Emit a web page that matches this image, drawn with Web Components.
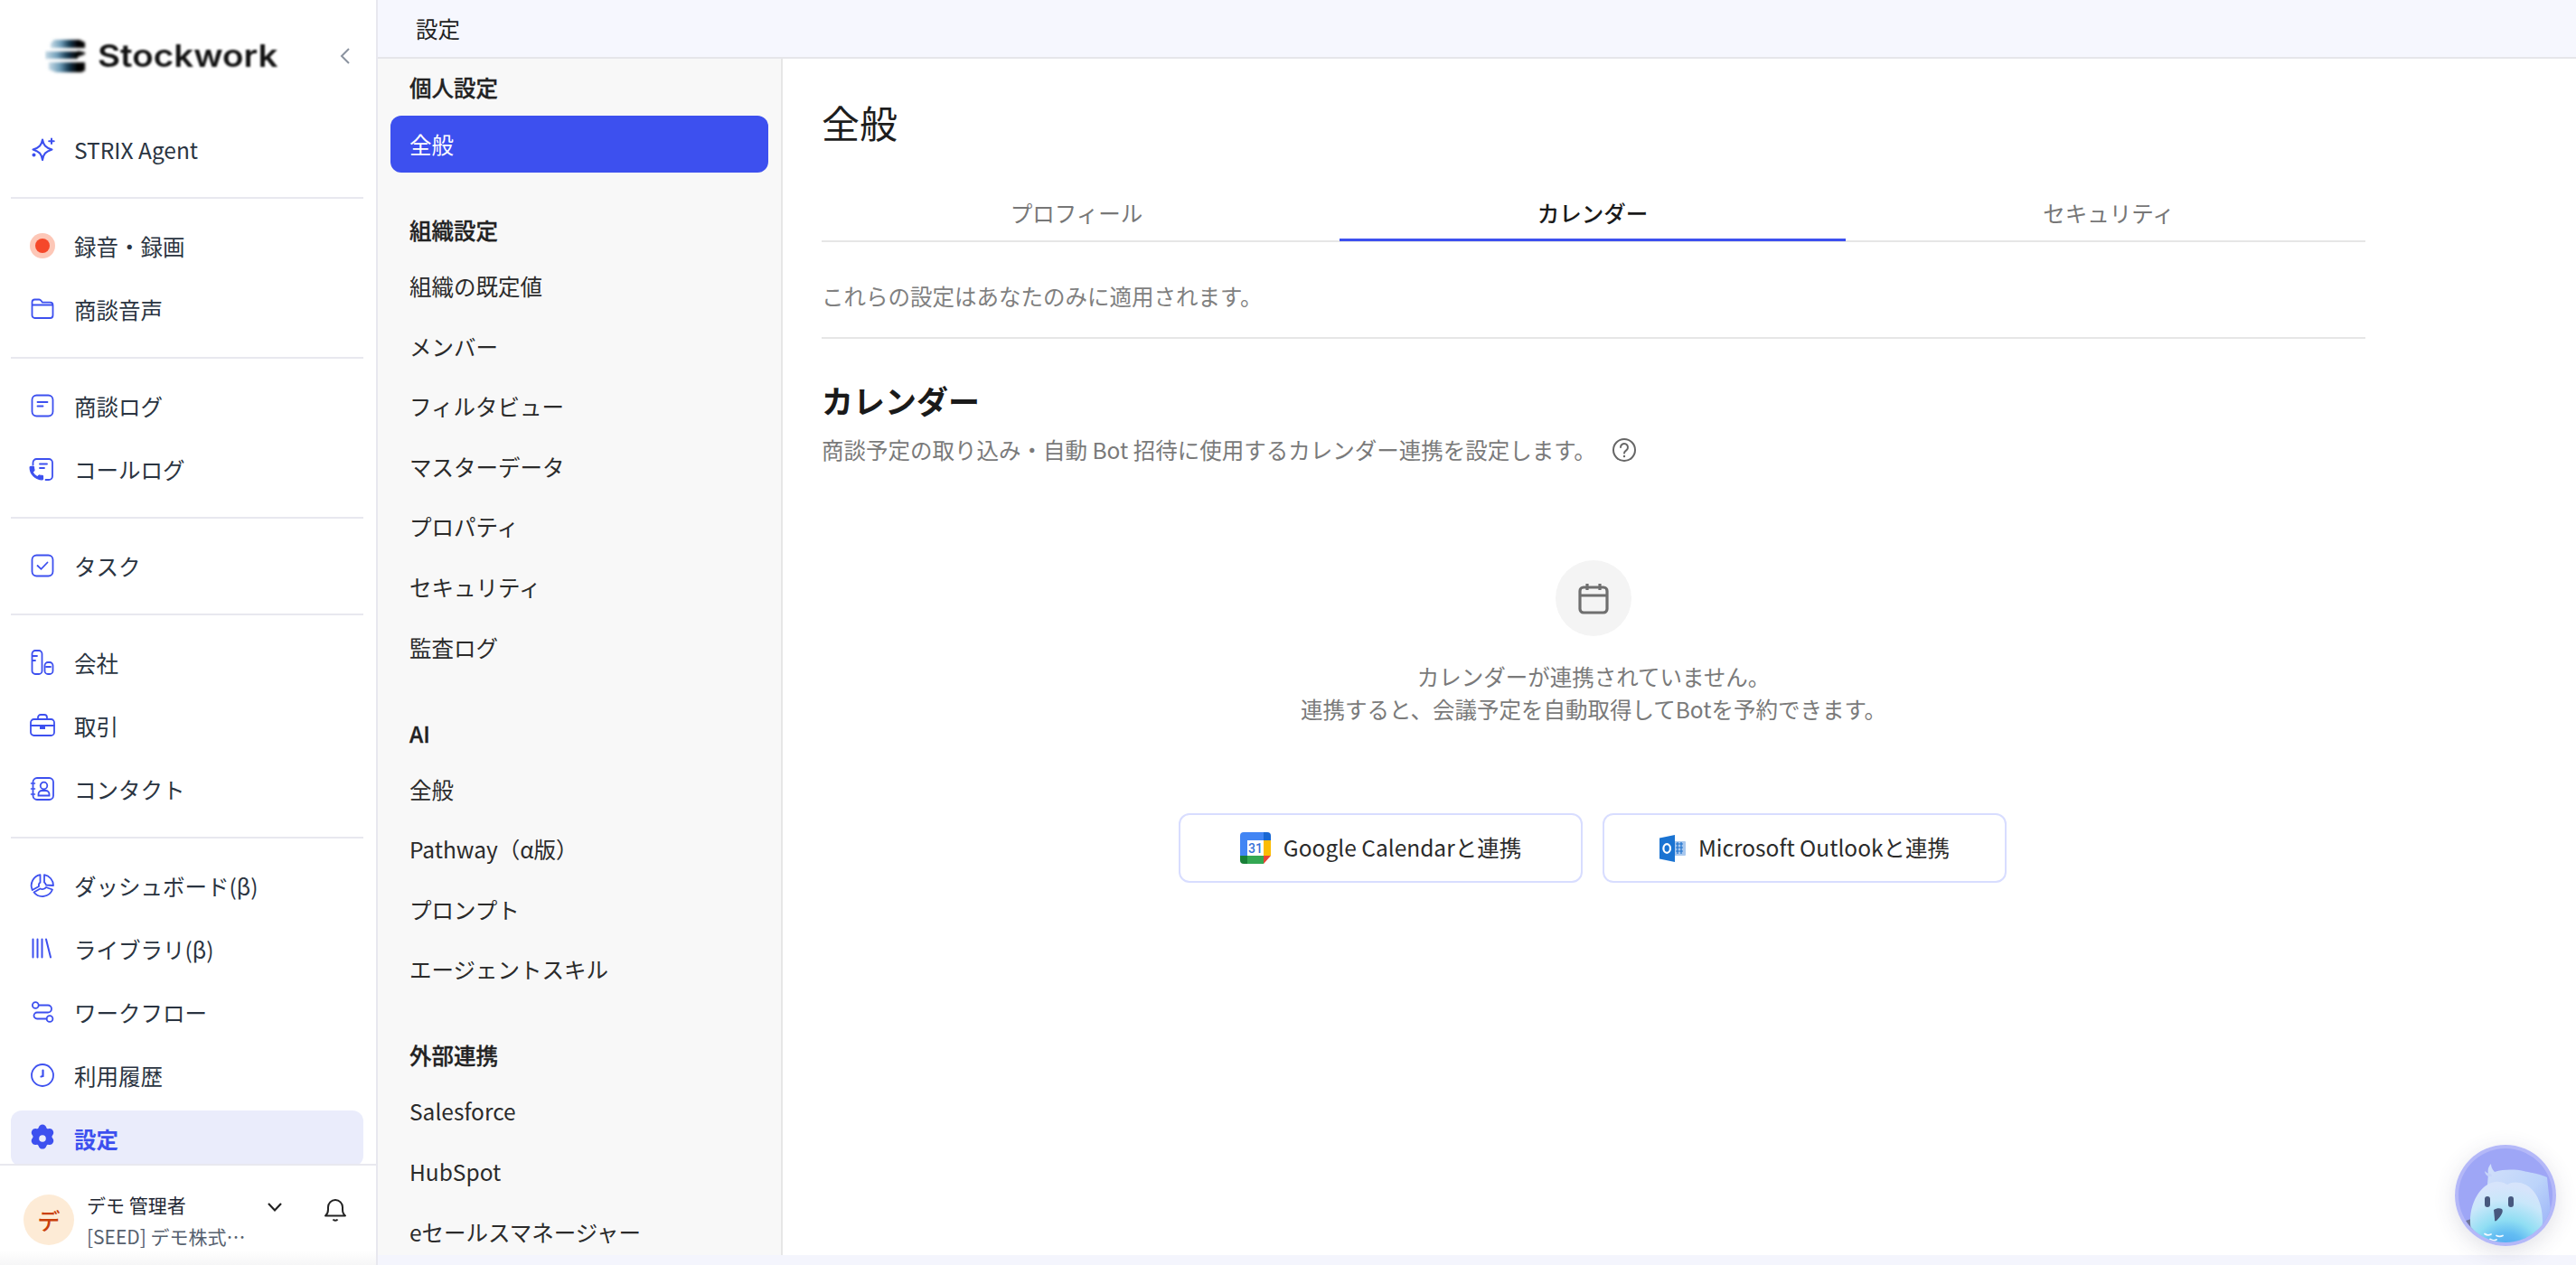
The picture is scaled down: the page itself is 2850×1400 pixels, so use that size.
<!DOCTYPE html>
<html lang="ja">
<head>
<meta charset="utf-8">
<title>設定</title>
<style>
html,body{margin:0;padding:0;height:100%;overflow:hidden}
body{font-family:"Noto Sans CJK JP","Noto Sans",sans-serif;background:#f4f5fd;color:#222}
</style>
</head>
<body>
<sw-app>
  <sw-sidebar slot="side">
    <sw-nav-item icon="spark">STRIX Agent</sw-nav-item>
    <sw-rule></sw-rule>
    <sw-nav-item icon="rec">録音・録画</sw-nav-item>
    <sw-nav-item icon="folder">商談音声</sw-nav-item>
    <sw-rule></sw-rule>
    <sw-nav-item icon="note">商談ログ</sw-nav-item>
    <sw-nav-item icon="call">コールログ</sw-nav-item>
    <sw-rule></sw-rule>
    <sw-nav-item icon="task">タスク</sw-nav-item>
    <sw-rule></sw-rule>
    <sw-nav-item icon="company">会社</sw-nav-item>
    <sw-nav-item icon="deal">取引</sw-nav-item>
    <sw-nav-item icon="contact">コンタクト</sw-nav-item>
    <sw-rule></sw-rule>
    <sw-nav-item icon="pie">ダッシュボード(β)</sw-nav-item>
    <sw-nav-item icon="lib">ライブラリ(β)</sw-nav-item>
    <sw-nav-item icon="flow">ワークフロー</sw-nav-item>
    <sw-nav-item icon="clock">利用履歴</sw-nav-item>
    <sw-nav-item icon="gear" active>設定</sw-nav-item>
  </sw-sidebar>
  <sw-topbar slot="top">設定</sw-topbar>
  <sw-settings-nav slot="mid">
    <sw-nav-head first>個人設定</sw-nav-head>
    <sw-set-item active>全般</sw-set-item>
    <sw-nav-head>組織設定</sw-nav-head>
    <sw-set-item>組織の既定値</sw-set-item>
    <sw-set-item>メンバー</sw-set-item>
    <sw-set-item>フィルタビュー</sw-set-item>
    <sw-set-item>マスターデータ</sw-set-item>
    <sw-set-item>プロパティ</sw-set-item>
    <sw-set-item>セキュリティ</sw-set-item>
    <sw-set-item>監査ログ</sw-set-item>
    <sw-nav-head>AI</sw-nav-head>
    <sw-set-item>全般</sw-set-item>
    <sw-set-item>Pathway（α版）</sw-set-item>
    <sw-set-item>プロンプト</sw-set-item>
    <sw-set-item>エージェントスキル</sw-set-item>
    <sw-nav-head>外部連携</sw-nav-head>
    <sw-set-item>Salesforce</sw-set-item>
    <sw-set-item>HubSpot</sw-set-item>
    <sw-set-item>eセールスマネージャー</sw-set-item>
  </sw-settings-nav>
  <sw-calendar-page slot="main"></sw-calendar-page>
  <sw-bot slot="float"></sw-bot>
</sw-app>
<script>
const ICONS = {
 spark:`<path d="M14 3.500C15 9.500 17.500 12.500 24.500 14.500C17.500 16.500 15 19.500 14 26C13 19.500 10.500 16.500 3.500 14.500C10.500 12.500 13 9.500 14 3.500Z" fill="none" stroke-width="2.100" stroke-linejoin="round"/><path d="M24 2.500v5.500M21.200 5.200h5.500" stroke-width="2"/><circle cx="4.500" cy="20.500" r="2" fill="currentColor" stroke="none"/>`,
 rec:`<circle cx="14" cy="14" r="14" fill="#fdc7b7" stroke="none"/><circle cx="14" cy="14" r="8" fill="#f5482a" stroke="none"/>`,
 folder:`<path d="M2.500 21V6.500a3 3 0 0 1 3-3h4.800c1 0 1.600.4 2.200 1.200l1.400 2h8.600a3 3 0 0 1 3 3V21a3 3 0 0 1-3 3h-17a3 3 0 0 1-3-3Z M2.500 9.500h23" fill="none"/>`,
 note:`<rect x="2.500" y="2.500" width="23" height="23" rx="5" fill="none"/><path d="M8.500 10h11M8.500 14.500h6"/>`,
 call:`<path d="M3.500 9.500V7a4 4 0 0 1 4-4H21a4 4 0 0 1 4 4v15a4 4 0 0 1-4 4h-3.500" fill="none"/><path d="M11 8.500h8M11 13h5" /><path transform="translate(-2.300 9) scale(.8)" d="M6.620 10.790c1.440 2.830 3.760 5.140 6.590 6.590l2.200-2.200c.27-.27.670-.36 1.020-.24 1.120.37 2.330.57 3.570.57.550 0 1 .45 1 1V20c0 .550-.45 1-1 1-9.390 0-17-7.610-17-17 0-.550.450-1 1-1h3.500c.550 0 1 .450 1 1 0 1.250.2 2.450.57 3.570.11.350.03.740-.25 1.020l-2.200 2.200z" fill="currentColor" stroke="currentColor" stroke-width="1.500"/>`,
 task:`<rect x="2.500" y="2.500" width="23" height="23" rx="5" fill="none"/><path d="M8.500 14l4 3.800 7-7.300" fill="none"/>`,
 company:`<rect x="2.500" y="1" width="11" height="26" rx="3.500" fill="none"/><rect x="16.500" y="14" width="9" height="13" rx="3.500" fill="none"/><path d="M3 7h5M3 12h3M18 19h5" />`,
 deal:`<rect x="1" y="7" width="26" height="18" rx="3.500" fill="none"/><path d="M9 7V5a3 3 0 0 1 3-3h4a3 3 0 0 1 3 3v2M1 14h26" fill="none"/><rect x="11" y="13.500" width="6" height="4.500" fill="currentColor" stroke="none"/>`,
 contact:`<rect x="3.500" y="2" width="22.500" height="24" rx="4.500" fill="none"/><circle cx="15.500" cy="10.500" r="3.800" fill="none"/><path d="M9.500 21.500v-1.500a4 4 0 0 1 4-4h4a4 4 0 0 1 4 4v1.500Z" fill="none"/><path d="M1.500 8h4M1.500 14h4M1.500 20h4" stroke-width="1.600"/>`,
 pie:`<path d="M16 2.200A12 12 0 0 1 26 14L18 13.500C17.500 12 16.800 11 16 10.500Z M11.500 2.200A12 12 0 0 0 2.800 19L10 15C9.500 13 10.200 11.500 11.500 10.500Z M4.500 21.500A12 12 0 0 0 25 18.500L18 16C16.500 18 13.500 18.500 11.500 17.500Z" fill="none" stroke-linejoin="round"/>`,
 lib:`<path d="M3.500 3.500v20M8.500 3.500v20M13.500 3.500v20M18 3.500l5 20" stroke-width="2"/>`,
 flow:`<circle cx="6.300" cy="6.500" r="3.400" fill="none"/><circle cx="22" cy="21.500" r="3.400" fill="none"/><path d="M9.800 6.500H20a4 4 0 0 1 0 8H8a3.500 3.500 0 0 0 0 7h10.500" fill="none"/>`,
 clock:`<circle cx="14" cy="14" r="12" fill="none"/><path d="M14.500 8.500v6.500l-2 .5" fill="none" stroke-width="2.200"/>`,
 gear:`<g fill="currentColor" stroke="none" transform="translate(14 14) scale(1.150) translate(-14 -14.500)"><path d="M14 .500c1.900 0 3.200 1.100 3.700 2.800.3 1 1.200 1.500 2.200 1.300 1.700-.4 3.300.2 4.200 1.800s.7 3.300-.5 4.600c-.7.800-.7 1.800 0 2.600 1.200 1.300 1.400 3 .5 4.600s-2.500 2.200-4.200 1.800c-1-.2-1.900.3-2.200 1.300-.5 1.700-1.800 2.800-3.700 2.800s-3.200-1.100-3.700-2.800c-.3-1-1.200-1.500-2.200-1.300-1.700.4-3.300-.2-4.200-1.800s-.7-3.300.5-4.600c.7-.8.7-1.800 0-2.600-1.200-1.300-1.400-3-.5-4.600s2.500-2.200 4.200-1.800c1 .2 1.900-.3 2.200-1.300C10.800 1.600 12.100.500 14 .500Z" transform="translate(0 .5)"/></g><circle cx="14" cy="14" r="3.800" fill="#eaecfb" stroke="none"/>`,
};
function def(name, css, html){
  customElements.define(name, class extends HTMLElement{
    constructor(){super();const r=this.attachShadow({mode:'open'});
      this._css=css;this._html=html;
      r.innerHTML=`<style>${css}</style>`+(typeof html==='function'?'':html);}
    connectedCallback(){if(typeof this._html==='function'&&!this._s){this._s=1;
      this.shadowRoot.innerHTML=`<style>${this._css}</style>${this._html(this)}`;}}
  });
}
def('sw-app',`
 :host{display:flex;width:2850px;height:1400px;position:relative;overflow:hidden;background:#f4f5fd}
 .side{flex:none}
 .right{flex:1;min-width:0;display:flex;flex-direction:column;padding-bottom:11px;box-sizing:border-box}
 .body{flex:1;min-height:0;display:flex}
`,`<div class="side"><slot name="side"></slot></div>
 <div class="right"><slot name="top"></slot>
  <div class="body"><slot name="mid"></slot><slot name="main"></slot></div></div>
 <slot name="float"></slot>`);

def('sw-sidebar',`
 :host{display:flex;flex-direction:column;width:418px;height:1400px;box-sizing:border-box;border-right:2px solid #e8e8ef;background:#fff;color:#2a3441}
 .logo{flex:none;height:134px;position:relative;display:flex;align-items:flex-start}
 .brand{display:flex;align-items:center;margin:41px 0 0 50px;filter:blur(.9px)}
 .brand svg{flex:none}
 .brand span{font:600 34px "Inter",sans-serif;color:#111;margin-left:12px;display:block;transform:scaleX(1.135);transform-origin:left}
 .collapse{position:absolute;left:375px;top:52px}
 nav{flex:1;min-height:0;overflow:hidden;display:flex;flex-direction:column;gap:8px}
 footer{flex:none;height:112px;box-sizing:border-box;border-top:2px solid #e8e8ef;display:flex;align-items:center;padding:9px 0 0 26px;position:relative;background:linear-gradient(#fff 85%,#f6f6f7)}
 .av{flex:none;width:56px;height:56px;border-radius:50%;background:#fdebd6;color:#c93f0a;font-size:25px;font-weight:500;display:flex;align-items:center;justify-content:center}
 .who{width:178px;margin-left:14px;min-width:0}
 .n{font-size:21px;line-height:36px;color:#1f2733;white-space:nowrap}
 .o{font-size:21px;line-height:34px;color:#56606e;white-space:nowrap}
 .chev{margin-left:21px;margin-top:-28px}
 .bell{margin-left:45px;margin-top:-22px}
 svg{display:block}
`,`<div class="logo"><div class="brand">
   <svg width="46" height="40" viewBox="0 0 46 40"><defs><linearGradient id="lg"><stop offset="0" stop-color="#c6dae6"/><stop offset=".3" stop-color="#6f9db8"/><stop offset=".55" stop-color="#16384f"/><stop offset=".8" stop-color="#000"/></linearGradient><filter id="lb" x="-10%" y="-10%" width="120%" height="120%"><feGaussianBlur stdDeviation=".8"/></filter></defs>
   <g fill="url(#lg)" filter="url(#lb)"><path d="M10 2h28l6 3v6H6V6Z"/><path d="M0 15h36v-1l8 2v2l-8 3v2H0Z"/><path d="M4 27h40v9l-4 2H12l-8-3Z"/></g></svg>
   <span>Stockwork</span></div>
   <svg class="collapse" width="14" height="20" viewBox="0 0 14 20"><path d="M11 2 3 10l8 8" fill="none" stroke="#8b93a0" stroke-width="2"/></svg>
 </div>
 <nav><slot></slot></nav>
 <footer>
  <div class="av">デ</div>
  <div class="who"><div class="n">デモ 管理者</div><div class="o">[SEED] デモ株式…</div></div>
  <svg class="chev" width="18" height="12" viewBox="0 0 18 12"><path d="M2 2l7 7.500L16 2" fill="none" stroke="#222" stroke-width="2.200"/></svg>
  <svg class="bell" width="26" height="28" viewBox="0 0 26 28"><path d="M2 20.500c2-1.500 3-3.500 3-7V11a8 8 0 0 1 16 0v2.500c0 3.500 1 5.500 3 7Z" fill="none" stroke="#222" stroke-width="2" stroke-linejoin="round"/><path d="M10.500 24.500c1 1.500 4 1.500 5 0" fill="none" stroke="#222" stroke-width="2"/></svg>
 </footer>`);

def('sw-rule',`:host{display:block;flex:none;height:2px;margin:14px 14px 13px 12px;background:#e8e8ef}`,'');

def('sw-nav-item',`
 :host{display:flex;flex:none;align-items:center;height:62px;margin:0 14px 0 12px;border-radius:12px;padding-left:21px;font-size:24.500px;color:#2a3441}
 :host([active]){background:#eaecfb;color:#3d50ef;font-weight:700}
 svg{flex:none;width:28px;height:28px;margin-right:21px;color:#3d50ef;stroke:currentColor;stroke-width:1.800;stroke-linecap:round;overflow:visible}
 span{white-space:nowrap}
`,el=>`<svg viewBox="0 0 28 28" fill="none">${ICONS[el.getAttribute('icon')]||''}</svg><span><slot></slot></span>`);

def('sw-topbar',`
 :host{display:flex;flex:none;align-items:center;height:65px;box-sizing:border-box;border-bottom:2px solid #e6e6ea;background:#f6f7fe;padding-left:42px;font-size:24.500px;color:#222}
`,`<slot></slot>`);

def('sw-settings-nav',`
 :host{display:block;flex:none;width:448px;box-sizing:border-box;padding:16px 14px 0;border-right:2px solid #e6e6e6;background:#f8f8f8;overflow:hidden}
`,`<slot></slot>`);
def('sw-nav-head',`
 :host{display:block;height:34px;line-height:34px;margin:47px 0 13px;padding-left:21px;font-size:24.500px;font-weight:500;-webkit-text-stroke:.3px #222;color:#222}
 :host([first]){margin-top:-1px;margin-bottom:14px}
`,`<slot></slot>`);
def('sw-set-item',`
 :host{display:flex;align-items:center;height:63px;margin-bottom:3.600px;padding-left:21px;border-radius:12px;font-size:24.500px;color:#2b2b2b;white-space:nowrap}
 :host([active]){background:#3d50ef;color:#fff}
`,`<slot></slot>`);

def('sw-calendar-page',`
 :host{display:block;flex:1;min-width:0;background:#fff;padding:42px 233px 0 43px;box-sizing:border-box;overflow:hidden}
 h1{margin:0;font-size:42px;line-height:56px;font-weight:400;color:#1d1d1d}
 sw-tabs{margin-top:44px}
 .note{margin:43px 0 0;font-size:24.500px;line-height:34px;color:#808080;padding-bottom:28px;border-bottom:2px solid #e6e6e6}
 h2{margin:44px 0 0;font-size:35px;line-height:48px;font-weight:700;color:#1a1a1a}
 .desc{margin:14px 0 0;font-size:24.500px;line-height:34px;color:#7a7a7a;display:flex;align-items:center;gap:17px}
 .empty{display:flex;flex-direction:column;align-items:center;margin-top:105px}
 .circle{width:84px;height:84px;border-radius:50%;background:#f4f4f4;display:flex;align-items:center;justify-content:center}
 .msg{margin:27px 0 0;font-size:24.500px;line-height:36px;color:#7a7a7a;text-align:center}
 .btns{display:flex;gap:22px;margin-top:97px;padding-right:2px}
 svg{display:block}
`,`<h1>全般</h1>
 <sw-tabs><sw-tab>プロフィール</sw-tab><sw-tab active>カレンダー</sw-tab><sw-tab>セキュリティ</sw-tab></sw-tabs>
 <p class="note">これらの設定はあなたのみに適用されます。</p>
 <h2>カレンダー</h2>
 <p class="desc"><span>商談予定の取り込み・自動 Bot 招待に使用するカレンダー連携を設定します。</span>
  <svg width="28" height="28" viewBox="0 0 28 28" fill="none" stroke="#666" stroke-width="2"><circle cx="14" cy="14" r="12"/><path d="M10 11a4 4 0 1 1 6.500 3.100c-1.500 1.100-2.500 1.700-2.500 3.400" stroke-linecap="round"/><circle cx="14" cy="21" r="1.200" fill="#666" stroke="none"/></svg></p>
 <div class="empty">
  <div class="circle"><svg width="36" height="36" viewBox="0 0 36 36" fill="none" stroke="#6f6f6f" stroke-width="3.200"><rect x="3" y="6" width="30" height="28" rx="4"/><path d="M3 15h30M11 2v7M25 2v7"/></svg></div>
  <p class="msg">カレンダーが連携されていません。<br>連携すると、会議予定を自動取得してBotを予約できます。</p>
  <div class="btns">
   <sw-connect>
    <svg slot="icon" width="34" height="35" viewBox="0 0 34 35"><path d="M8 0h18v9H8Z" fill="#4285f4"/><path d="M26 0h4a4 4 0 0 1 4 4v5h-8Z" fill="#1967d2"/><path d="M26 9h8v17h-8Z" fill="#fbbc04"/><path d="M26 26h8l-8 9Z" fill="#ea4335"/><path d="M8 26h18v9H8Z" fill="#34a853"/><path d="M0 26h8v9H4a4 4 0 0 1-4-4Z" fill="#188038"/><path d="M0 4a4 4 0 0 1 4-4h4v26H0Z" fill="#4285f4"/><rect x="8" y="9" width="18" height="17" fill="#fff"/><text x="17" y="23" text-anchor="middle" font-family="Roboto,sans-serif" font-size="14" font-weight="500" fill="#3572d8">31</text></svg>
    Google Calendarと連携</sw-connect>
   <sw-connect>
    <svg slot="icon" width="29" height="30" viewBox="0 0 29 30"><rect x="15" y="7" width="14" height="16" rx="1" fill="#a9c8ee"/><path d="M18 10h8M18 14h8M18 18h8M20 8v13M24 8v13" stroke="#1f72cd" stroke-width="1.200"/><path d="M0 3.500 17 0v30L0 26.500Z" fill="#1a73d2"/><ellipse cx="8.200" cy="15" rx="3.800" ry="4.800" fill="none" stroke="#fff" stroke-width="2.200"/></svg>
    Microsoft Outlookと連携</sw-connect>
  </div>
 </div>`);

def('sw-tabs',`
 :host{display:flex;justify-content:center;gap:11px;padding-right:2px;border-bottom:2px solid #e6e6e6}
`,`<slot></slot>`);
def('sw-tab',`
 :host{flex:none;width:560px;display:block;text-align:center;height:60px;box-sizing:border-box;padding-top:12px;line-height:34px;font-size:24.500px;color:#777;margin-bottom:-1px;border-bottom:3px solid transparent}
 :host([active]){color:#1a1a1a;font-weight:500;border-bottom-color:#3d50ef}
`,`<slot></slot>`);
def('sw-connect',`
 :host{display:flex;align-items:center;justify-content:center;gap:14px;width:447px;height:77px;box-sizing:border-box;border:2px solid #d8ddff;border-radius:12px;background:#fff;font-size:24.500px;color:#2b2b2b;white-space:nowrap}
 span{padding-bottom:2px}
`,`<slot name="icon"></slot><span><slot></slot></span>`);

def('sw-bot',`
 :host{position:absolute;left:2716px;top:1267px;width:112px;height:112px;border-radius:50%;box-shadow:0 6px 24px rgba(60,60,100,.16)}
 svg{display:block}
`,`<svg width="112" height="112" viewBox="0 0 112 112"><defs>
  <clipPath id="c"><circle cx="56" cy="56" r="52"/></clipPath>
  <linearGradient id="body" x1="0" y1="0" x2="1" y2="1"><stop offset="0" stop-color="#d3e0fa"/><stop offset=".5" stop-color="#bcd4fa"/><stop offset="1" stop-color="#8ea6f7"/></linearGradient>
  <radialGradient id="face" cx=".5" cy="1.020" r=".95"><stop offset="0" stop-color="#4a9ff0"/><stop offset=".3" stop-color="#63bdf2"/><stop offset=".5" stop-color="#90def3"/><stop offset=".8" stop-color="#c9e7fa"/><stop offset="1" stop-color="#d6e4fb"/></radialGradient>
 </defs>
 <circle cx="56" cy="56" r="56" fill="#b4b8f8"/><circle cx="56" cy="56" r="52" fill="#9ea6f6"/>
 <g clip-path="url(#c)">
  <path d="M16 114 12 84l6-2 6 30Z" fill="#6e7498"/>
  <path d="M37 32c-1-4 0-8 3-11 0 3 1 6 4 9 10-3 22-3 32-1 8 2 18 3 26 7l8 76H30Z" fill="url(#body)"/>
  <path d="M37 35c-2-1-4-3-4-6 2 2 4 3 7 3l1 3Z" fill="#c7d5f9"/>
  <path d="M17 85c0-26 16-46 32-44 5 .5 7 2 9 3 4-3 10-3 14-2 15 3 25 20 25 42 0 20-12 34-40 34S17 104 17 85Z" fill="url(#face)"/>
  <path d="M33 98.500c2 1.500 5 1.500 7 .5M39 104.500c2 1.500 5 1.500 7 .5M46 100.500c2 1 5 1 7 0" fill="none" stroke="#f1f9ff" stroke-width="1.800" stroke-linecap="round"/>
 </g>
 <rect x="33" y="57" width="6" height="12" rx="3" fill="#47587e"/><rect x="59" y="57" width="6" height="12" rx="3" fill="#47587e"/>
 <path d="M43 72c3-2 7-2 9-1 2 2 0 7-6 13-2 1-2 0-2-2Z" fill="#47587e"/>
 </svg>`);
</script>
</body>
</html>
